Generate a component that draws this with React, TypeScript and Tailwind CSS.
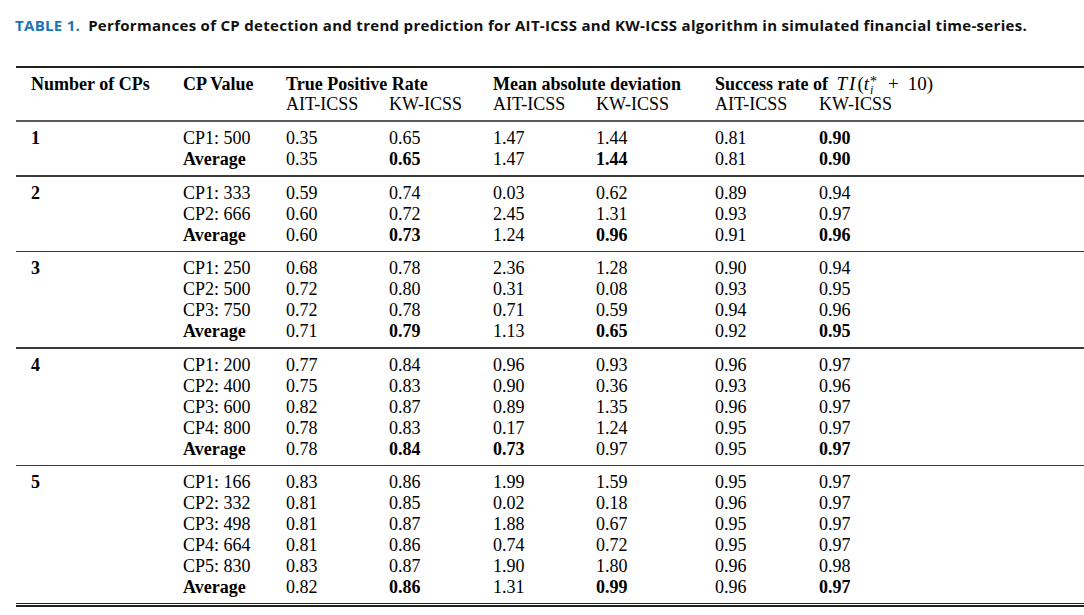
const GROUPS: { n: string; rows: string[][] }[] = [
  {
    n: "1",
    rows: [
      ["CP1: 500", "0.35", "0.65", "1.47", "1.44", "0.81", "*0.90"],
      ["*Average", "0.35", "*0.65", "1.47", "*1.44", "0.81", "*0.90"],
    ],
  },
  {
    n: "2",
    rows: [
      ["CP1: 333", "0.59", "0.74", "0.03", "0.62", "0.89", "0.94"],
      ["CP2: 666", "0.60", "0.72", "2.45", "1.31", "0.93", "0.97"],
      ["*Average", "0.60", "*0.73", "1.24", "*0.96", "0.91", "*0.96"],
    ],
  },
  {
    n: "3",
    rows: [
      ["CP1: 250", "0.68", "0.78", "2.36", "1.28", "0.90", "0.94"],
      ["CP2: 500", "0.72", "0.80", "0.31", "0.08", "0.93", "0.95"],
      ["CP3: 750", "0.72", "0.78", "0.71", "0.59", "0.94", "0.96"],
      ["*Average", "0.71", "*0.79", "1.13", "*0.65", "0.92", "*0.95"],
    ],
  },
  {
    n: "4",
    rows: [
      ["CP1: 200", "0.77", "0.84", "0.96", "0.93", "0.96", "0.97"],
      ["CP2: 400", "0.75", "0.83", "0.90", "0.36", "0.93", "0.96"],
      ["CP3: 600", "0.82", "0.87", "0.89", "1.35", "0.96", "0.97"],
      ["CP4: 800", "0.78", "0.83", "0.17", "1.24", "0.95", "0.97"],
      ["*Average", "0.78", "*0.84", "*0.73", "0.97", "0.95", "*0.97"],
    ],
  },
  {
    n: "5",
    rows: [
      ["CP1: 166", "0.83", "0.86", "1.99", "1.59", "0.95", "0.97"],
      ["CP2: 332", "0.81", "0.85", "0.02", "0.18", "0.96", "0.97"],
      ["CP3: 498", "0.81", "0.87", "1.88", "0.67", "0.95", "0.97"],
      ["CP4: 664", "0.81", "0.86", "0.74", "0.72", "0.95", "0.97"],
      ["CP5: 830", "0.83", "0.87", "1.90", "1.80", "0.96", "0.98"],
      ["*Average", "0.82", "*0.86", "1.31", "*0.99", "0.96", "*0.97"],
    ],
  },
];

// column starts: 31, 183, 286, 389, 493, 596, 715, 819
const COLS =
  "grid grid-cols-[152px_103px_103px_104px_103px_119px_104px_1fr]";

function Cell({ v }: { v: string }) {
  const bold = v.startsWith("*");
  return <div className={bold ? "font-bold" : ""}>{bold ? v.slice(1) : v}</div>;
}

export default function App() {
  return (
    <div className="h-[615px] w-[1084px] bg-white text-black">
      {/* caption */}
      <div className="whitespace-nowrap pl-[15px] pt-[15px] font-['Open_Sans',sans-serif] text-[15px] font-bold leading-[20px] tracking-[0.3px] text-[#111]">
        <span className="text-[#1b75bc]">TABLE 1.</span>
        <span className="ml-[8px]">
          Performances of CP detection and trend prediction for AIT-ICSS and KW-ICSS algorithm in
          simulated financial time-series.
        </span>
      </div>

      <div className="ml-[16px] mt-[31px] font-['Liberation_Serif',serif] text-[18px]">
        <div className="h-[2px] bg-[#222]" />

        {/* header */}
        <div className="pl-[15px] pt-[6px] pb-[6px] leading-[20px]">
          <div className={COLS + " h-[20px] font-bold"}>
            <div>Number of CPs</div>
            <div>CP Value</div>
            <div className="col-span-2">True Positive Rate</div>
            <div className="col-span-2">Mean absolute deviation</div>
            <div className="col-span-2 whitespace-nowrap">
              Success rate of{" "}
              <span className="ml-[4px] text-[19px] font-normal">
                <i className="tracking-[2px]">TI</i>(<i>t</i>
                <span className="relative inline-block w-[10px]">
                  <span className="absolute left-[1px] top-[-15px] text-[14px] leading-[14px]">*</span>
                  <i className="absolute left-[1px] top-[-6px] text-[12px] leading-[12px]">i</i>
                </span>
                <span className="ml-[9px]">+</span>
                <span className="ml-[9px]">10)</span>
              </span>
            </div>
          </div>
          <div className={COLS}>
            <div />
            <div />
            <div>AIT-ICSS</div>
            <div>KW-ICSS</div>
            <div>AIT-ICSS</div>
            <div>KW-ICSS</div>
            <div>AIT-ICSS</div>
            <div>KW-ICSS</div>
          </div>
        </div>

        <div className="h-[2px] bg-[#5a5a5a]" />

        {GROUPS.map((g, gi) => (
          <div key={g.n}>
            <div className="pl-[15px] pt-[6px] pb-[5px] leading-[21px]">
              {g.rows.map((r, ri) => (
                <div key={ri} className={COLS}>
                  <div className="font-bold">{ri === 0 ? g.n : ""}</div>
                  {r.map((v, ci) => (
                    <Cell key={ci} v={v} />
                  ))}
                </div>
              ))}
            </div>
            {gi < GROUPS.length - 1 ? (
              <div className="h-[1.5px] bg-[#3a3a3a]" />
            ) : (
              <div className="flex flex-col gap-[1px]">
                <div className="h-[1px] bg-[#222]" />
                <div className="h-[1.5px] bg-[#222]" />
              </div>
            )}
          </div>
        ))}
      </div>
    </div>
  );
}
